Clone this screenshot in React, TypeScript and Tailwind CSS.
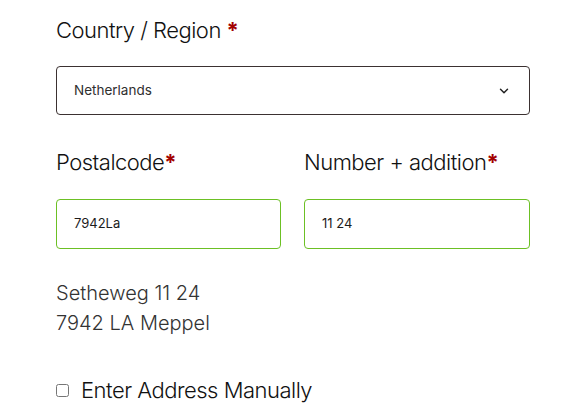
import { ChevronDown } from "lucide-react";

function Label({ text, spaced }: { text: string; spaced?: boolean }) {
  return (
    <div className="text-[22px] leading-[32px] font-light text-[#111] tracking-[-0.5px]">
      {text}
      {spaced ? " " : ""}
      <span className="text-[#a30000] font-bold">*</span>
    </div>
  );
}

export default function App() {
  return (
    <div
      className="w-[564px] h-[414px] bg-white overflow-hidden"
      style={{ fontFamily: "Inter, 'Noto Sans', sans-serif" }}
    >
      <div className="ml-[56px] w-[474px] pt-[14px]">
        <Label text="Country / Region" spaced />
        <div className="mt-[20px] h-[49px] border border-[#3b3131] rounded-[4px] flex items-center justify-between pl-[17px] pr-[18px]">
          <span className="text-[13.5px] text-[#2f2f2f]">Netherlands</span>
          <ChevronDown size={14} strokeWidth={2.5} className="text-[#222]" />
        </div>

        <div className="mt-[31px] grid grid-cols-[225px_226px] gap-[23px]">
          <div>
            <Label text="Postalcode" />
            <div className="mt-[21px] h-[50px] border border-[#6cc024] rounded-[4px] flex items-center pl-[17px]">
              <span className="text-[13px] text-[#1c1c1c]">7942La</span>
            </div>
          </div>
          <div>
            <Label text="Number + addition" />
            <div className="mt-[21px] h-[50px] border border-[#6cc024] rounded-[4px] flex items-center pl-[17px]">
              <span className="text-[13px] text-[#1c1c1c]">11 24</span>
            </div>
          </div>
        </div>

        <div className="mt-[29px] text-[20px] leading-[30px] font-light text-[#333]">
          <div>Setheweg 11 24</div>
          <div>7942 LA Meppel</div>
        </div>

        <label className="mt-[36px] flex items-center gap-[12px]">
          <input type="checkbox" className="w-[13px] h-[13px] m-0" />
          <span className="text-[22px] leading-[32px] font-light text-[#111] tracking-[-0.5px]">
            Enter Address Manually
          </span>
        </label>
      </div>
    </div>
  );
}
